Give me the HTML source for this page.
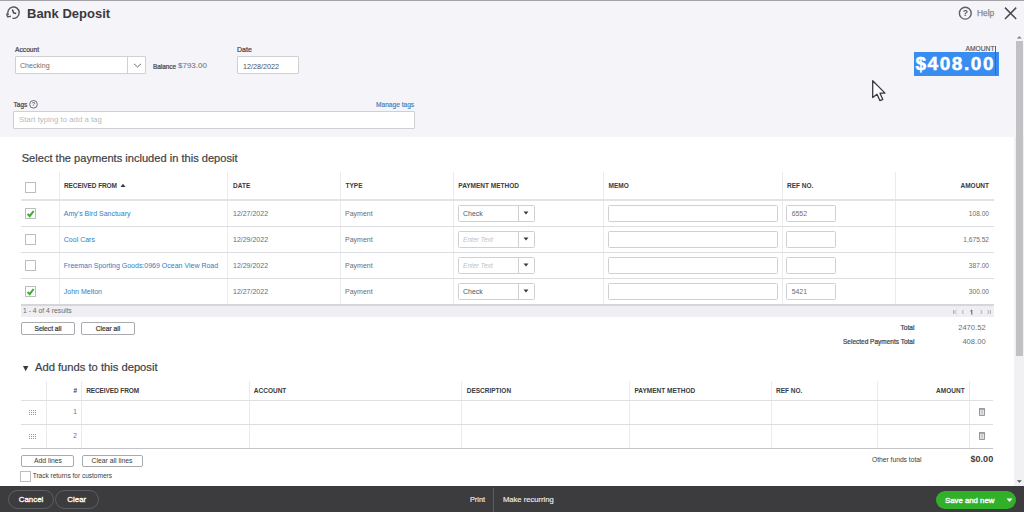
<!DOCTYPE html>
<html><head><meta charset="utf-8">
<style>
*{box-sizing:border-box;margin:0;padding:0}
html,body{width:1024px;height:512px;overflow:hidden;background:#fff}
body{position:relative;font-family:"Liberation Sans",sans-serif;color:#393a3d}
.a{position:absolute;white-space:nowrap}
</style></head><body>
<div class="a" style="left:0px;top:0px;width:1024px;height:137px;background:#f5f4f9;"></div>
<div class="a" style="left:0px;top:0px;width:1024px;height:1px;background:#a3a3a7;"></div>
<svg class="a" style="left:4.4px;top:5.3px" width="20" height="18" viewBox="0 0 20 18"><path d="M4.33 10.11 A5.7 5.7 0 1 1 8.51 13.31" fill="none" stroke="#55565b" stroke-width="1.4"/>
<path d="M2.6 8.6 L3.6 11.9 L6.9 11.3" fill="none" stroke="#55565b" stroke-width="1.4" stroke-linejoin="round"/>
<path d="M8.4 4.6 L9.6 7.9 L12.2 8.5" fill="none" stroke="#393a3d" stroke-width="1.4"/></svg>
<div class="a" style="top:6.21px;font-size:13px;color:#393a3d;left:27.00px;font-weight:bold;">Bank Deposit</div>
<svg class="a" style="left:957px;top:5px" width="16" height="16" viewBox="0 0 16 16"><circle cx="8.3" cy="8.2" r="5.9" fill="none" stroke="#5f6065" stroke-width="1.4"/>
<text x="8.3" y="11.2" font-size="8.5" font-weight="bold" text-anchor="middle" fill="#55565b" font-family="Liberation Sans">?</text></svg>
<div class="a" style="top:7.99px;font-size:8.4px;color:#858a90;left:977.00px;-webkit-text-stroke:0.25px #858a90;">Help</div>
<svg class="a" style="left:1003px;top:6px" width="15" height="15" viewBox="0 0 15 15"><path d="M2 1.6 L13.2 13 M13.2 1.6 L2 13" stroke="#4a4b50" stroke-width="1.5"/></svg>
<div class="a" style="top:45.67px;font-size:6.7px;color:#45464b;left:15.00px;-webkit-text-stroke:0.22px #45464b;">Account</div>
<div class="a" style="left:15px;top:56px;width:131px;height:18px;background:#fff;border:1px solid #cfd0d4;border-radius:1px;"></div>
<div class="a" style="left:127px;top:57px;width:1px;height:16px;background:#cfd0d4;"></div>
<svg class="a" style="left:133px;top:63px" width="9" height="5" viewBox="0 0 9 5"><path d="M1 0.8 L4.5 4 L8 0.8" fill="none" stroke="#6b6c72" stroke-width="1"/></svg>
<div class="a" style="top:61.80px;font-size:7.1px;color:#6b6c72;left:20.00px;">Checking</div>
<div class="a" style="top:62.85px;font-size:6.4px;color:#45464b;left:153.00px;-webkit-text-stroke:0.22px #45464b;">Balance</div>
<div class="a" style="top:61.36px;font-size:8px;color:#6b6c72;left:178.00px;">$793.00</div>
<div class="a" style="top:45.69px;font-size:7px;color:#45464b;left:237.00px;-webkit-text-stroke:0.22px #45464b;">Date</div>
<div class="a" style="left:237px;top:56px;width:62px;height:18px;background:#fff;border:1px solid #cfd0d4;border-radius:1px;"></div>
<div class="a" style="top:61.60px;font-size:7.2px;color:#4f5055;left:243.00px;">12/28/2022</div>
<div class="a" style="top:100.55px;font-size:6.5px;color:#45464b;left:13.60px;-webkit-text-stroke:0.22px #45464b;">Tags</div>
<svg class="a" style="left:28px;top:99px" width="11" height="11" viewBox="0 0 11 11"><circle cx="5.5" cy="5.3" r="3.8" fill="none" stroke="#6b6c72" stroke-width="1"/><text x="5.5" y="7.4" font-size="5.5" font-weight="bold" text-anchor="middle" fill="#6b6c72" font-family="Liberation Sans">?</text></svg>
<div class="a" style="top:100.96px;font-size:6.6px;color:#3a7ebf;left:376.00px;-webkit-text-stroke:0.15px #3a7ebf;">Manage tags</div>
<div class="a" style="left:13px;top:111px;width:402px;height:18px;background:#fff;border:1px solid #cfd0d4;border-radius:1px;"></div>
<div class="a" style="top:114.95px;font-size:7.8px;color:#b9babf;left:19.00px;">Start typing to add a tag</div>
<div class="a" style="top:45.17px;font-size:6.7px;color:#55565b;right:29.50px;-webkit-text-stroke:0.15px #55565b;">AMOUNT</div>
<div class="a" style="left:914px;top:52px;width:85px;height:23.5px;background:#3a8df0;"></div>
<div class="a" style="left:995px;top:46px;width:1px;height:29px;background:#2a6ad0;"></div>
<div class="a" style="top:53.13px;font-size:19px;color:#fff;left:915.50px;font-weight:bold;letter-spacing:1.55px;-webkit-text-stroke:0.5px #fff;">$408.00</div>
<svg class="a" style="left:868px;top:77px" width="20" height="26" viewBox="0 0 20 26"><path d="M4.7 3.8 L4.7 20.5 L9 17.3 L12 23.6 L14.8 22.4 L12 16.2 L17 16.1 Z" fill="#fff" stroke="#393a3d" stroke-width="1.3" stroke-linejoin="round"/></svg>
<div class="a" style="left:1014px;top:137px;width:10px;height:349px;background:#f1f1f3;"></div>
<svg class="a" style="left:1015px;top:34px" width="8" height="6" viewBox="0 0 8 6"><path d="M1.8 4.6 L6.8 4.6 L4.3 2.2Z" fill="#77777c"/></svg>
<div class="a" style="left:1016px;top:41px;width:7px;height:315px;background:#c1c1c4;"></div>
<svg class="a" style="left:1015px;top:479px" width="8" height="6" viewBox="0 0 8 6"><path d="M1.9 1.3 L6.9 1.3 L4.4 3.8Z" fill="#55565b"/></svg>
<div class="a" style="top:152.18px;font-size:11.1px;color:#404145;left:21.70px;-webkit-text-stroke:0.2px #404145;">Select the payments included in this deposit</div>
<div class="a" style="left:59px;top:172px;width:1px;height:132px;background:#ebebee;"></div>
<div class="a" style="left:227px;top:172px;width:1px;height:132px;background:#ebebee;"></div>
<div class="a" style="left:340px;top:172px;width:1px;height:132px;background:#ebebee;"></div>
<div class="a" style="left:453px;top:172px;width:1px;height:132px;background:#ebebee;"></div>
<div class="a" style="left:603px;top:172px;width:1px;height:132px;background:#ebebee;"></div>
<div class="a" style="left:782px;top:172px;width:1px;height:132px;background:#ebebee;"></div>
<div class="a" style="left:895px;top:172px;width:1px;height:132px;background:#ebebee;"></div>
<div class="a" style="left:21px;top:199px;width:973px;height:2px;background:#e3e3e6;"></div>
<div class="a" style="left:21px;top:226px;width:973px;height:1px;background:#dcdde0;"></div>
<div class="a" style="left:21px;top:252px;width:973px;height:1px;background:#dcdde0;"></div>
<div class="a" style="left:21px;top:278px;width:973px;height:1px;background:#dcdde0;"></div>
<div class="a" style="left:21px;top:304px;width:973px;height:2px;background:#d6d5da;"></div>
<div class="a" style="left:21px;top:306px;width:973px;height:10.5px;background:#efeef2;"></div>
<div class="a" style="left:25px;top:182px;width:11px;height:11px;background:#fff;border:1px solid #bcbdc1;border-radius:0.5px;"></div>
<div class="a" style="top:181.96px;font-size:6.5px;color:#393a3d;left:64.00px;font-weight:bold;letter-spacing:-0.1px;">RECEIVED FROM</div>
<div class="a" style="top:181.96px;font-size:6.5px;color:#393a3d;left:233.00px;font-weight:bold;">DATE</div>
<div class="a" style="top:181.96px;font-size:6.5px;color:#393a3d;left:345.50px;font-weight:bold;">TYPE</div>
<div class="a" style="top:181.96px;font-size:6.5px;color:#393a3d;left:458.30px;font-weight:bold;">PAYMENT METHOD</div>
<div class="a" style="top:181.96px;font-size:6.5px;color:#393a3d;left:608.60px;font-weight:bold;">MEMO</div>
<div class="a" style="top:181.96px;font-size:6.5px;color:#393a3d;left:787.00px;font-weight:bold;">REF NO.</div>
<div class="a" style="top:181.96px;font-size:6.5px;color:#393a3d;right:35.00px;font-weight:bold;">AMOUNT</div>
<svg class="a" style="left:120px;top:183px" width="6" height="5" viewBox="0 0 6 5"><path d="M0.5 4 L5.5 4 L3 0.8Z" fill="#393a3d"/></svg>
<div class="a" style="left:25px;top:208px;width:11px;height:11px;background:#fff;border:1px solid #bcbdc1;border-radius:0.5px;"></div>
<svg class="a" style="left:25px;top:208px" width="11" height="11" viewBox="0 0 11 11"><path d="M2.6 6 L4.7 8.2 L8.6 3" fill="none" stroke="#38b02c" stroke-width="2"/></svg>
<div class="a" style="top:209.89px;font-size:7px;color:#2d7ec4;left:63.80px;">Amy's Bird Sanctuary</div>
<div class="a" style="top:209.89px;font-size:7px;color:#6b6c72;left:233.00px;">12/27/2022</div>
<div class="a" style="top:209.89px;font-size:7px;color:#6b6c72;left:345.00px;">Payment</div>
<div class="a" style="left:458px;top:205px;width:77px;height:17px;background:#fff;border:1px solid #cfd0d4;border-radius:1.5px;"></div>
<div class="a" style="left:518px;top:206px;width:1px;height:15px;background:#cfd0d4;"></div>
<svg class="a" style="left:523px;top:211px" width="6" height="4" viewBox="0 0 6 4"><path d="M0.5 0.5 L5.5 0.5 L3 3.5Z" fill="#393a3d"/></svg>
<div class="a" style="top:209.89px;font-size:7px;color:#55565b;left:463.00px;">Check</div>
<div class="a" style="left:608px;top:205px;width:170px;height:17px;background:#fff;border:1px solid #cfd0d4;border-radius:1.5px;"></div>
<div class="a" style="left:786px;top:205px;width:50px;height:17px;background:#fff;border:1px solid #cfd0d4;border-radius:1.5px;"></div>
<div class="a" style="top:209.98px;font-size:6.9px;color:#6b6c72;left:791.70px;">6552</div>
<div class="a" style="top:210.26px;font-size:6.6px;color:#6b6c72;right:35.00px;">108.00</div>
<div class="a" style="left:25px;top:234px;width:11px;height:11px;background:#fff;border:1px solid #bcbdc1;border-radius:0.5px;"></div>
<div class="a" style="top:235.89px;font-size:7px;color:#2d7ec4;left:63.80px;">Cool Cars</div>
<div class="a" style="top:235.89px;font-size:7px;color:#6b6c72;left:233.00px;">12/29/2022</div>
<div class="a" style="top:235.89px;font-size:7px;color:#6b6c72;left:345.00px;">Payment</div>
<div class="a" style="left:458px;top:231px;width:77px;height:17px;background:#fff;border:1px solid #cfd0d4;border-radius:1.5px;"></div>
<div class="a" style="left:518px;top:232px;width:1px;height:15px;background:#cfd0d4;"></div>
<svg class="a" style="left:523px;top:237px" width="6" height="4" viewBox="0 0 6 4"><path d="M0.5 0.5 L5.5 0.5 L3 3.5Z" fill="#393a3d"/></svg>
<div class="a" style="top:236.26px;font-size:6.6px;color:#c0c1c5;left:463.00px;font-style:italic;">Enter Text</div>
<div class="a" style="left:608px;top:231px;width:170px;height:17px;background:#fff;border:1px solid #cfd0d4;border-radius:1.5px;"></div>
<div class="a" style="left:786px;top:231px;width:50px;height:17px;background:#fff;border:1px solid #cfd0d4;border-radius:1.5px;"></div>
<div class="a" style="top:236.26px;font-size:6.6px;color:#6b6c72;right:35.00px;">1,675.52</div>
<div class="a" style="left:25px;top:260px;width:11px;height:11px;background:#fff;border:1px solid #bcbdc1;border-radius:0.5px;"></div>
<div class="a" style="top:261.89px;font-size:7px;color:#2d7ec4;left:63.80px;">Freeman Sporting Goods:0969 Ocean View Road</div>
<div class="a" style="top:261.89px;font-size:7px;color:#6b6c72;left:233.00px;">12/29/2022</div>
<div class="a" style="top:261.89px;font-size:7px;color:#6b6c72;left:345.00px;">Payment</div>
<div class="a" style="left:458px;top:257px;width:77px;height:17px;background:#fff;border:1px solid #cfd0d4;border-radius:1.5px;"></div>
<div class="a" style="left:518px;top:258px;width:1px;height:15px;background:#cfd0d4;"></div>
<svg class="a" style="left:523px;top:263px" width="6" height="4" viewBox="0 0 6 4"><path d="M0.5 0.5 L5.5 0.5 L3 3.5Z" fill="#393a3d"/></svg>
<div class="a" style="top:262.26px;font-size:6.6px;color:#c0c1c5;left:463.00px;font-style:italic;">Enter Text</div>
<div class="a" style="left:608px;top:257px;width:170px;height:17px;background:#fff;border:1px solid #cfd0d4;border-radius:1.5px;"></div>
<div class="a" style="left:786px;top:257px;width:50px;height:17px;background:#fff;border:1px solid #cfd0d4;border-radius:1.5px;"></div>
<div class="a" style="top:262.26px;font-size:6.6px;color:#6b6c72;right:35.00px;">387.00</div>
<div class="a" style="left:25px;top:286px;width:11px;height:11px;background:#fff;border:1px solid #bcbdc1;border-radius:0.5px;"></div>
<svg class="a" style="left:25px;top:286px" width="11" height="11" viewBox="0 0 11 11"><path d="M2.6 6 L4.7 8.2 L8.6 3" fill="none" stroke="#38b02c" stroke-width="2"/></svg>
<div class="a" style="top:287.89px;font-size:7px;color:#2d7ec4;left:63.80px;">John Melton</div>
<div class="a" style="top:287.89px;font-size:7px;color:#6b6c72;left:233.00px;">12/27/2022</div>
<div class="a" style="top:287.89px;font-size:7px;color:#6b6c72;left:345.00px;">Payment</div>
<div class="a" style="left:458px;top:283px;width:77px;height:17px;background:#fff;border:1px solid #cfd0d4;border-radius:1.5px;"></div>
<div class="a" style="left:518px;top:284px;width:1px;height:15px;background:#cfd0d4;"></div>
<svg class="a" style="left:523px;top:289px" width="6" height="4" viewBox="0 0 6 4"><path d="M0.5 0.5 L5.5 0.5 L3 3.5Z" fill="#393a3d"/></svg>
<div class="a" style="top:287.89px;font-size:7px;color:#55565b;left:463.00px;">Check</div>
<div class="a" style="left:608px;top:283px;width:170px;height:17px;background:#fff;border:1px solid #cfd0d4;border-radius:1.5px;"></div>
<div class="a" style="left:786px;top:283px;width:50px;height:17px;background:#fff;border:1px solid #cfd0d4;border-radius:1.5px;"></div>
<div class="a" style="top:287.98px;font-size:6.9px;color:#6b6c72;left:791.70px;">5421</div>
<div class="a" style="top:288.26px;font-size:6.6px;color:#6b6c72;right:35.00px;">300.00</div>
<div class="a" style="top:306.68px;font-size:6.8px;color:#6b6c72;left:23.00px;">1 - 4 of 4 results</div>
<svg class="a" style="left:952px;top:308px" width="40" height="8" viewBox="0 0 40 8"><g fill="none" stroke="#a9aaaf" stroke-width="0.9"><path d="M1.6 2 V6 M4.4 2 L2.6 4 L4.4 6 M11.6 2 L10.2 4 L11.6 6 M28.6 2 L30 4 L28.6 6 M35.4 2 L37.2 4 L35.4 6 M38.4 2 V6"/></g><path d="M18.5 3 L19.8 2 V6.6" fill="none" stroke="#55565b" stroke-width="1"/></svg>
<div class="a" style="-webkit-text-stroke:0.22px #393a3d;left:21px;top:321.5px;width:54px;height:13.5px;line-height:11.5px;background:#fff;border:1px solid #a9aaae;border-radius:2px;font-size:6.7px;color:#393a3d;text-align:center">Select all</div>
<div class="a" style="-webkit-text-stroke:0.22px #393a3d;left:81px;top:321.5px;width:54px;height:13.5px;line-height:11.5px;background:#fff;border:1px solid #a9aaae;border-radius:2px;font-size:6.7px;color:#393a3d;text-align:center">Clear all</div>
<div class="a" style="top:323.86px;font-size:6.6px;color:#45464b;right:109.60px;-webkit-text-stroke:0.22px #45464b;">Total</div>
<div class="a" style="top:322.93px;font-size:7.6px;color:#6b6c72;right:38.40px;">2470.52</div>
<div class="a" style="top:337.56px;font-size:6.5px;color:#45464b;right:109.60px;-webkit-text-stroke:0.22px #45464b;">Selected Payments Total</div>
<div class="a" style="top:336.53px;font-size:7.6px;color:#6b6c72;right:38.40px;">408.00</div>
<svg class="a" style="left:22.8px;top:365.6px" width="6" height="6" viewBox="0 0 6 6"><path d="M0 0 L5.4 0 L2.7 5.2Z" fill="#393a3d"/></svg>
<div class="a" style="top:360.58px;font-size:11.2px;color:#404145;left:35.00px;-webkit-text-stroke:0.2px #404145;">Add funds to this deposit</div>
<div class="a" style="left:46px;top:381px;width:1px;height:67px;background:#ebebee;"></div>
<div class="a" style="left:81px;top:381px;width:1px;height:67px;background:#ebebee;"></div>
<div class="a" style="left:249px;top:381px;width:1px;height:67px;background:#ebebee;"></div>
<div class="a" style="left:461px;top:381px;width:1px;height:67px;background:#ebebee;"></div>
<div class="a" style="left:629px;top:381px;width:1px;height:67px;background:#ebebee;"></div>
<div class="a" style="left:771px;top:381px;width:1px;height:67px;background:#ebebee;"></div>
<div class="a" style="left:877px;top:381px;width:1px;height:67px;background:#ebebee;"></div>
<div class="a" style="left:969px;top:381px;width:1px;height:67px;background:#ebebee;"></div>
<div class="a" style="left:21px;top:399.5px;width:972px;height:1.5px;background:#e0e0e3;"></div>
<div class="a" style="left:21px;top:424px;width:972px;height:1px;background:#dcdde0;"></div>
<div class="a" style="left:21px;top:448px;width:972px;height:1px;background:#c4c4c8;"></div>
<div class="a" style="top:387.15px;font-size:6.5px;color:#393a3d;right:947.00px;font-weight:bold;">#</div>
<div class="a" style="top:387.15px;font-size:6.5px;color:#393a3d;left:86.20px;font-weight:bold;letter-spacing:-0.1px;">RECEIVED FROM</div>
<div class="a" style="top:387.15px;font-size:6.5px;color:#393a3d;left:253.80px;font-weight:bold;">ACCOUNT</div>
<div class="a" style="top:387.15px;font-size:6.5px;color:#393a3d;left:466.70px;font-weight:bold;">DESCRIPTION</div>
<div class="a" style="top:387.15px;font-size:6.5px;color:#393a3d;left:634.50px;font-weight:bold;">PAYMENT METHOD</div>
<div class="a" style="top:387.15px;font-size:6.5px;color:#393a3d;left:776.00px;font-weight:bold;">REF NO.</div>
<div class="a" style="top:387.15px;font-size:6.5px;color:#393a3d;right:59.40px;font-weight:bold;">AMOUNT</div>
<svg class="a" style="left:29px;top:410px" width="7" height="5" viewBox="0 0 7 5"><rect x="0" y="0" width="1" height="1" fill="#97989c"/><rect x="0" y="2" width="1" height="1" fill="#97989c"/><rect x="0" y="4" width="1" height="1" fill="#97989c"/><rect x="2" y="0" width="1" height="1" fill="#97989c"/><rect x="2" y="2" width="1" height="1" fill="#97989c"/><rect x="2" y="4" width="1" height="1" fill="#97989c"/><rect x="4" y="0" width="1" height="1" fill="#97989c"/><rect x="4" y="2" width="1" height="1" fill="#97989c"/><rect x="4" y="4" width="1" height="1" fill="#97989c"/><rect x="6" y="0" width="1" height="1" fill="#97989c"/><rect x="6" y="2" width="1" height="1" fill="#97989c"/><rect x="6" y="4" width="1" height="1" fill="#97989c"/></svg>
<div class="a" style="top:408.36px;font-size:6.6px;color:#6b6c72;right:947.00px;">1</div>
<svg class="a" style="left:978px;top:407px" width="8" height="12" viewBox="0 0 8 12"><path d="M1.5 2 H6.5 V8.5 H1.5Z" fill="#e9e9ec" stroke="#8a8b90" stroke-width="0.9"/><path d="M1 1.8 H7" stroke="#8a8b90" stroke-width="1.1"/><path d="M3.3 3 V7.5 M4.7 3 V7.5" stroke="#a5a6aa" stroke-width="0.5"/></svg>
<svg class="a" style="left:29px;top:434px" width="7" height="5" viewBox="0 0 7 5"><rect x="0" y="0" width="1" height="1" fill="#97989c"/><rect x="0" y="2" width="1" height="1" fill="#97989c"/><rect x="0" y="4" width="1" height="1" fill="#97989c"/><rect x="2" y="0" width="1" height="1" fill="#97989c"/><rect x="2" y="2" width="1" height="1" fill="#97989c"/><rect x="2" y="4" width="1" height="1" fill="#97989c"/><rect x="4" y="0" width="1" height="1" fill="#97989c"/><rect x="4" y="2" width="1" height="1" fill="#97989c"/><rect x="4" y="4" width="1" height="1" fill="#97989c"/><rect x="6" y="0" width="1" height="1" fill="#97989c"/><rect x="6" y="2" width="1" height="1" fill="#97989c"/><rect x="6" y="4" width="1" height="1" fill="#97989c"/></svg>
<div class="a" style="top:432.36px;font-size:6.6px;color:#6b6c72;right:947.00px;">2</div>
<svg class="a" style="left:978px;top:431px" width="8" height="12" viewBox="0 0 8 12"><path d="M1.5 2 H6.5 V8.5 H1.5Z" fill="#e9e9ec" stroke="#8a8b90" stroke-width="0.9"/><path d="M1 1.8 H7" stroke="#8a8b90" stroke-width="1.1"/><path d="M3.3 3 V7.5 M4.7 3 V7.5" stroke="#a5a6aa" stroke-width="0.5"/></svg>
<div class="a" style="left:21.4px;top:454.5px;width:53px;height:12.5px;line-height:10.5px;background:#fff;border:1px solid #a9aaae;border-radius:2px;font-size:6.8px;color:#393a3d;text-align:center">Add lines</div>
<div class="a" style="left:81.5px;top:454.5px;width:61px;height:12.5px;line-height:10.5px;background:#fff;border:1px solid #a9aaae;border-radius:2px;font-size:6.8px;color:#393a3d;text-align:center">Clear all lines</div>
<div class="a" style="top:455.57px;font-size:6.7px;color:#393a3d;left:872.00px;">Other funds total</div>
<div class="a" style="top:454.04px;font-size:9.1px;color:#393a3d;right:30.80px;font-weight:bold;">$0.00</div>
<div class="a" style="left:20px;top:471px;width:11px;height:11px;background:#fff;border:1px solid #bcbdc1;border-radius:0.5px;"></div>
<div class="a" style="top:471.95px;font-size:6.5px;color:#393a3d;left:32.70px;">Track returns for customers</div>
<div class="a" style="left:0px;top:486px;width:1024px;height:26px;background:#3c3b3d;"></div>
<div class="a" style="left:8px;top:490px;width:46px;height:19px;line-height:17px;border:1px solid #5d5e62;border-radius:9.5px;color:#fff;font-size:7.9px;-webkit-text-stroke:0.3px #fff;text-align:center">Cancel</div>
<div class="a" style="left:55px;top:490px;width:43.5px;height:19px;line-height:17px;border:1px solid #5d5e62;border-radius:9.5px;color:#fff;font-size:7.9px;-webkit-text-stroke:0.3px #fff;text-align:center">Clear</div>
<div class="a" style="top:494.81px;font-size:7.3px;color:#ececec;left:470.00px;-webkit-text-stroke:0.15px #ececec;">Print</div>
<div class="a" style="left:493px;top:488px;width:1px;height:24px;background:#5d5e62;"></div>
<div class="a" style="top:494.53px;font-size:7.6px;color:#ececec;left:503.00px;-webkit-text-stroke:0.15px #ececec;">Make recurring</div>
<div class="a" style="left:936px;top:490.5px;width:80px;height:18.5px;background:#31b02a;border-radius:9.25px;"></div>
<div class="a" style="top:495.75px;font-size:7.8px;color:#fff;left:945.00px;-webkit-text-stroke:0.35px #fff;">Save and new</div>
<svg class="a" style="left:1006px;top:498px" width="7" height="5" viewBox="0 0 7 5"><path d="M0.5 0.5 L6.5 0.5 L3.5 4Z" fill="#fff"/></svg>
</body></html>
